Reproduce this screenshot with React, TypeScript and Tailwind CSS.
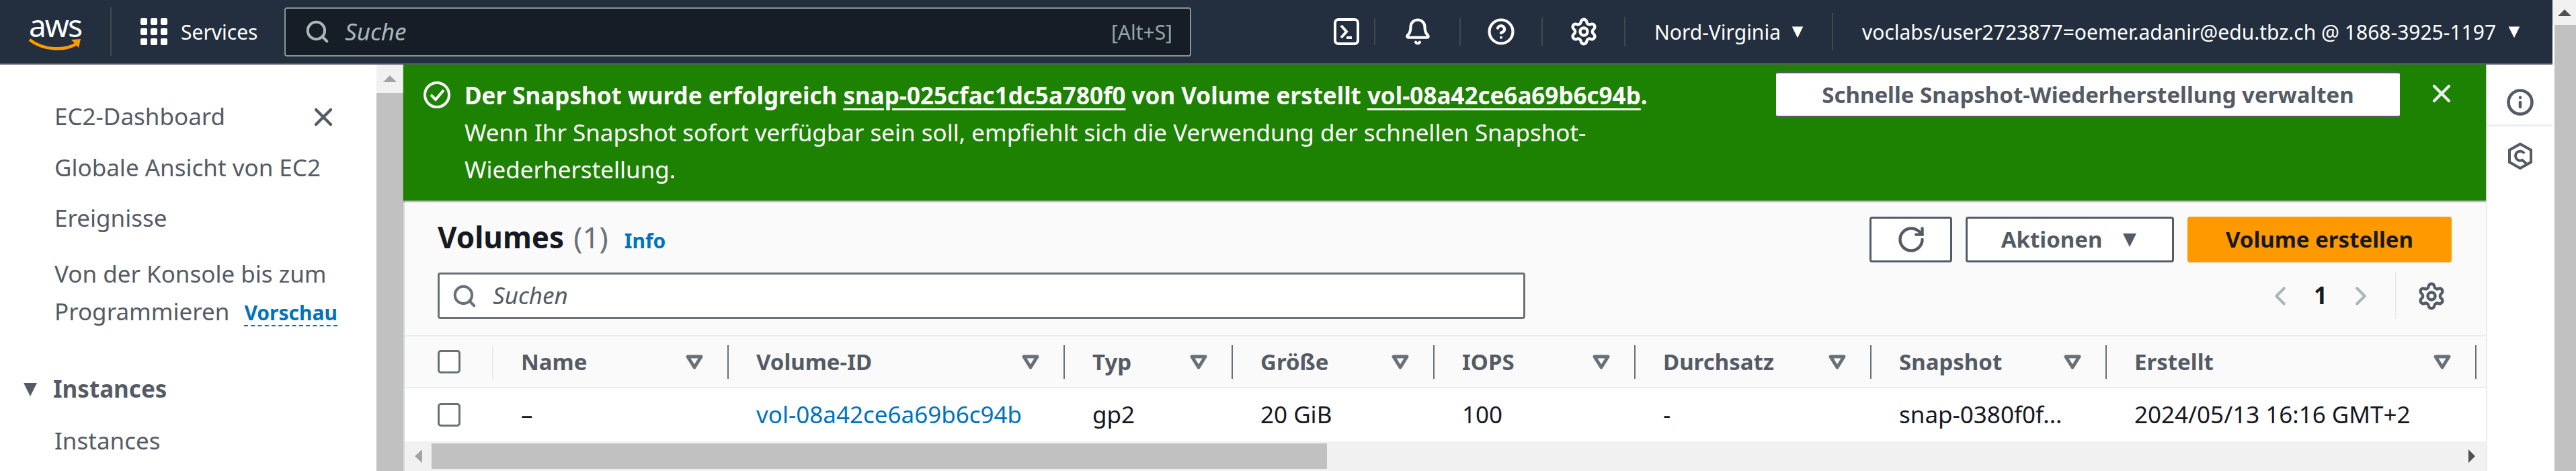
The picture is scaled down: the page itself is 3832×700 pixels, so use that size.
import { Bell, ChevronLeft, ChevronRight, CircleHelp, Info, RotateCw, Search, Settings, X } from 'lucide-react'

const columns = [
  { label: 'Name', value: '–', width: 'w-[350px]' },
  { label: 'Volume-ID', value: 'vol-08a42ce6a69b6c94b', width: 'w-[500px]', link: true },
  { label: 'Typ', value: 'gp2', width: 'w-[250px]' },
  { label: 'Größe', value: '20 GiB', width: 'w-[300px]' },
  { label: 'IOPS', value: '100', width: 'w-[299px]' },
  { label: 'Durchsatz', value: '-', width: 'w-[351px]' },
  { label: 'Snapshot', value: 'snap-0380f0f...', width: 'w-[350px]' },
  { label: 'Erstellt', value: '2024/05/13 16:16 GMT+2', width: 'w-[550px]' },
]

function Caret({ className }: { className: string }) {
  return (
    <svg viewBox="0 0 24 24" className={className} aria-hidden="true">
      <path d="M2 3h20L12 23z" fill="currentColor" />
    </svg>
  )
}

function FilterCaret() {
  return (
    <svg viewBox="0 0 26 22" className="w-[26px] h-[22px] text-[#687078] shrink-0" aria-hidden="true">
      <path d="M3 3h20L13 19z" fill="#fff" stroke="currentColor" strokeWidth="5" strokeLinejoin="round" />
    </svg>
  )
}

function Checkbox() {
  return <div className="w-[34px] h-[35px] rounded-[5px] border-[3px] border-[#687078] bg-white" />
}

function ServiceGrid() {
  return (
    <svg viewBox="0 0 40 40" className="w-[40px] h-[40px]" aria-hidden="true" fill="#fff">
      {[0, 15, 30].map((y) =>
        [0, 15, 30].map((x) => <rect key={`${x}-${y}`} x={x} y={y} width="10" height="10" rx="2" />),
      )}
    </svg>
  )
}

function ShellIcon() {
  return (
    <svg viewBox="0 0 40 40" className="w-[42px] h-[40px]" fill="none" stroke="#fff" strokeWidth="4" aria-hidden="true">
      <rect x="3" y="2" width="34" height="36" rx="5" />
      <path d="M12 11l8 9-8 9M20 29h8" />
    </svg>
  )
}

function SuccessIcon() {
  return (
    <svg viewBox="0 0 40 40" className="w-[40px] h-[40px] shrink-0" fill="none" stroke="#fff" strokeWidth="4" aria-hidden="true">
      <circle cx="20" cy="20" r="18" />
      <path d="M11 20l7 7 12-14" />
    </svg>
  )
}

function ScrollArrowUp({ className }: { className: string }) {
  return (
    <svg viewBox="0 0 20 10" className={className} aria-hidden="true">
      <path d="M10 0l10 10H0z" fill="currentColor" />
    </svg>
  )
}

export default function App() {
  return (
    <div className="flex w-[3832px] h-[700px] overflow-hidden bg-white text-[35px] text-[#16191f] [font-family:'Noto_Sans',sans-serif]">
      <div className="flex flex-col w-[3797px]">
        {/* Top bar */}
        <header className="flex items-center h-[96px] shrink-0 bg-[#232f3e] border-b-2 border-[#545b64] text-white">
          <div className="flex flex-col items-center w-[166px] pl-[0px] h-[72px] justify-center border-r-2 border-[#414750]">
            <span className="text-[46px] leading-[38px] tracking-[-2px]">aws</span>
            <svg viewBox="0 0 80 20" className="w-[80px] h-[20px]" aria-hidden="true">
              <path d="M2 3c20 16 52 17 70 6" fill="none" stroke="#f90" strokeWidth="4.5" />
              <path d="M64 3l14-1-3 13z" fill="#f90" />
            </svg>
          </div>
          <div className="flex items-center gap-[20px] pl-[43px] w-[257px]">
            <ServiceGrid />
            <span className="text-[30px]">Services</span>
          </div>
          <div className="flex items-center w-[1349px] h-[73px] rounded-[4px] border-2 border-[#879596] bg-[#161d26] pl-[28px] pr-[26px] text-[#aab7b8]">
            <Search className="w-[38px] h-[38px]" strokeWidth={2.6} />
            <span className="ml-[22px] italic text-[35px]">Suche</span>
            <span className="ml-auto text-[30px] text-[#95a5a6]">[Alt+S]</span>
          </div>
          <div className="flex items-center ml-[190px] h-[56px]">
            <div className="flex justify-center w-[84px] border-r-2 border-[#414750]"><ShellIcon /></div>
            <div className="flex justify-center w-[127px] border-r-2 border-[#414750]"><Bell className="w-[42px] h-[42px]" strokeWidth={2.4} /></div>
            <div className="flex justify-center w-[122px] border-r-2 border-[#414750]"><CircleHelp className="w-[42px] h-[42px]" strokeWidth={2.4} /></div>
            <div className="flex justify-center w-[123px] border-r-2 border-[#414750]"><Settings className="w-[44px] h-[44px]" strokeWidth={2.4} /></div>
            <div className="flex items-center w-[309px] h-[56px] pl-[43px] border-r-2 border-[#414750] text-[30px]">
              <span>Nord-Virginia</span>
              <Caret className="w-[20px] h-[20px] ml-[15px] text-white" />
            </div>
            <div className="flex items-center pl-[43px] text-[30px]">
              <span className="whitespace-nowrap">voclabs/user2723877=oemer.adanir@edu.tbz.ch @ 1868-3925-1197</span>
              <Caret className="w-[20px] h-[20px] ml-[17px] text-white" />
            </div>
          </div>
        </header>

        <div className="flex flex-1 min-h-0">
          {/* Side navigation */}
          <nav className="w-[560px] shrink-0 pl-[81px] pt-[40px] text-[#545b64]">
            <div className="flex items-center justify-between h-[75px] pr-[57px]">
              <span>EC2-Dashboard</span>
              <X className="w-[44px] h-[44px]" strokeWidth={2.4} />
            </div>
            <div className="h-[75px] leading-[75px]">Globale Ansicht von EC2</div>
            <div className="h-[75px] leading-[75px]">Ereignisse</div>
            <div className="leading-[56px] pt-[18px] whitespace-nowrap">
              Von der Konsole bis zum
              <div className="flex items-baseline gap-[22px]">
                <span>Programmieren</span>
                <span className="text-[30px] font-bold text-[#0073bb] leading-[36px] border-b-2 border-dashed border-[#0073bb]">Vorschau</span>
              </div>
            </div>
            <div className="flex items-center gap-[21px] -ml-[49px] mt-[62px] h-[50px] font-bold">
              <Caret className="w-[26px] h-[24px] text-[#545b64]" />
              <span>Instances</span>
            </div>
            <div className="h-[75px] mt-[14px] leading-[75px]">Instances</div>
            <div className="h-[75px] leading-[75px]">Instance Types</div>
          </nav>

          {/* Side navigation scrollbar */}
          <div className="flex flex-col items-center w-[40px] shrink-0 bg-[#f1f1f1]">
            <div className="flex items-center justify-center h-[42px] shrink-0 w-full">
              <ScrollArrowUp className="w-[20px] h-[10px] text-[#a3a3a3]" />
            </div>
            <div className="flex-1 w-full bg-[#c1c1c1]" />
          </div>

          {/* Main content */}
          <main className="flex flex-col w-[3098px] shrink-0 min-w-0">
            <section className="flex items-start h-[202px] shrink-0 bg-[#1d8102] text-white pl-[30px] pr-[44px] pt-[25px] shadow-[0_2px_2px_rgba(0,0,0,0.35)] relative">
              <SuccessIcon />
              <div className="ml-[21px] leading-[55px] w-[1730px] -mt-[7px]">
                <div className="font-bold whitespace-nowrap">
                  Der Snapshot wurde erfolgreich <span className="underline underline-offset-[6px] decoration-[3px]">snap-025cfac1dc5a780f0</span> von Volume erstellt <span className="underline underline-offset-[6px] decoration-[3px]">vol-08a42ce6a69b6c94b</span>.
                </div>
                <div>Wenn Ihr Snapshot sofort verfügbar sein soll, empfiehlt sich die Verwendung der schnellen Snapshot-</div>
                <div>Wiederherstellung.</div>
              </div>
              <button className="ml-auto -mt-[15px] w-[928px] h-[69px] rounded-[4px] bg-white border-y-[3px] border-[#545b64] text-[#545b64] font-bold text-[33px] whitespace-nowrap">
                Schnelle Snapshot-Wiederherstellung verwalten
              </button>
              <X className="ml-[40px] -mt-[4px] w-[44px] h-[44px] shrink-0 text-[#eaeded]" strokeWidth={2.4} />
            </section>

            <section className="flex flex-col flex-1 min-h-0 bg-[#fafafa] border-l-2 border-[#d5dbdb]">
              <div className="flex h-[202px] shrink-0 border-b-2 border-[#eaeded] pl-[49px] pr-[51px] pt-[24px]">
                <div className="flex-1 min-w-0">
                  <div className="flex items-baseline h-[83px]">
                    <span className="text-[44px] font-bold leading-[60px]">Volumes</span>
                    <span className="text-[44px] text-[#687078] ml-[14px] leading-[60px]">(1)</span>
                    <span className="text-[30px] font-bold text-[#0073bb] ml-[24px]">Info</span>
                  </div>
                  <div className="flex items-center w-[1618px] h-[69px] rounded-[4px] border-[3px] border-[#687078] bg-white pl-[18px] text-[#545b64]">
                    <Search className="w-[38px] h-[38px] text-[#687078]" strokeWidth={2.6} />
                    <span className="ml-[23px] italic">Suchen</span>
                  </div>
                </div>
                <div className="flex flex-col items-end">
                  <div className="flex gap-[20px] h-[68px]">
                    <button className="flex items-center justify-center w-[123px] rounded-[4px] border-[3px] border-[#545b64] bg-white text-[#545b64]">
                      <RotateCw className="w-[44px] h-[44px]" strokeWidth={2.4} />
                    </button>
                    <button className="flex items-center justify-center gap-[28px] w-[310px] rounded-[4px] border-[3px] border-[#545b64] bg-white text-[#545b64] font-bold text-[33px]">
                      Aktionen
                      <Caret className="w-[26px] h-[24px]" />
                    </button>
                    <button className="w-[393px] rounded-[4px] bg-[#ff9900] font-bold text-[33px] text-[#16191f]">Volume erstellen</button>
                  </div>
                  <div className="flex items-center h-[69px] mt-[15px]">
                    <ChevronLeft className="w-[46px] h-[46px] text-[#aab7b8]" strokeWidth={2.2} />
                    <span className="ml-[27px] font-bold">1</span>
                    <ChevronRight className="ml-[27px] w-[46px] h-[46px] text-[#aab7b8]" strokeWidth={2.2} />
                    <div className="ml-[28px] h-full border-l-2 border-[#eaeded] flex items-center pl-[30px] pr-[8px]">
                      <Settings className="w-[44px] h-[44px] text-[#545b64]" strokeWidth={2.4} />
                    </div>
                  </div>
                </div>
              </div>

              {/* Table */}
              <div className="flex items-center h-[77px] shrink-0 border-b-2 border-[#eaeded] pl-[49px] font-bold text-[#545b64] text-[33px]">
                <div className="flex items-center w-[83px] h-[50px] border-r-2 border-[#eaeded]"><Checkbox /></div>
                {columns.map((col) => (
                  <div key={col.label} className={`flex items-center justify-between ${col.width} h-[50px] border-r-2 border-[#687078] pl-[41px] pr-[36px]`}>
                    <span>{col.label}</span>
                    {col.label !== 'Durchsatz' || true ? <FilterCaret /> : null}
                  </div>
                ))}
              </div>
              <div className="flex items-center h-[79px] shrink-0 bg-white pl-[49px]">
                <div className="w-[83px]"><Checkbox /></div>
                {columns.map((col) => (
                  <div key={col.label} className={`${col.width} pl-[41px] whitespace-nowrap ${col.link ? 'text-[#0073bb]' : ''}`}>
                    {col.value}
                  </div>
                ))}
              </div>

              {/* Horizontal scrollbar */}
              <div className="flex items-center flex-1 bg-[#f1f1f1]">
                <div className="flex justify-center w-[40px] shrink-0">
                  <div className="w-0 h-0 border-y-[10px] border-y-transparent border-r-[11px] border-r-[#a3a3a3]" />
                </div>
                <div className="w-[1332px] h-[38px] bg-[#c1c1c1]" />
                <div className="ml-auto mr-[16px] w-0 h-0 border-y-[10px] border-y-transparent border-l-[10px] border-l-[#505050]" />
              </div>
            </section>
          </main>

          {/* Tools panel */}
          <aside className="flex flex-col items-center flex-1 border-l-2 border-[#eaeded]">
            <div className="flex justify-center items-center w-full h-[92px] border-b-[3px] border-[#eaeded]">
              <Info className="w-[42px] h-[42px] text-[#545b64] mt-[22px]" strokeWidth={2.6} />
            </div>
            <svg viewBox="0 0 40 40" className="w-[40px] h-[40px] mt-[24px]" fill="none" stroke="#545b64" strokeWidth="4" aria-hidden="true">
              <path d="M20 2l16 9v18l-16 9-16-9V11z" />
              <path d="M26 16a7 7 0 1 0-3 10l6 5" />
            </svg>
          </aside>
        </div>
      </div>

      {/* Page scrollbar */}
      <div className="flex flex-col w-[35px] shrink-0 bg-white">
        <div className="flex items-center justify-center h-[37px] bg-[#f1f1f1]">
          <ScrollArrowUp className="w-[20px] h-[10px] text-[#505050]" />
        </div>
        <div className="flex-1 ml-[3px] bg-[#c1c1c1]" />
      </div>
    </div>
  )
}
